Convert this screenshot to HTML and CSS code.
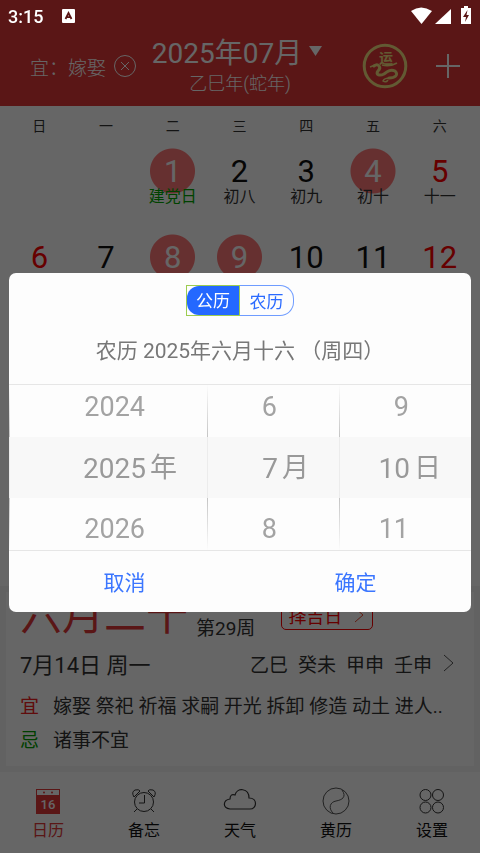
FILE: index.html
```html
<!DOCTYPE html>
<html lang="zh-CN">
<head>
    <meta charset="UTF-8">
    <meta name="viewport" content="width=device-width, initial-scale=1">
    <title>日历</title>
    <link rel="stylesheet" href="styles.css">
</head>
<body>
    <div class="app">
        <!-- Header with status bar -->
        <header class="header">
            <div class="status-bar">
                <span class="status-time">3:15</span>
                <svg class="status-app" width="13" height="14" viewBox="0 0 13 14">
                    <rect width="13" height="14" rx="1" fill="#fff"/>
                    <path d="M3.5 10 L6.5 4 L9.5 10 M4.8 8.2 H8.2" fill="none" stroke="#5a1616" stroke-width="1.8"/>
                </svg>
                <svg class="status-icons" width="62" height="20" viewBox="0 0 62 20">
                    <path d="M1 5 Q11 -2 22 5 L11.500 18 Z" fill="#fff"/>
                    <path d="M41 3 V18 H25 Z" fill="#fff"/>
                    <path d="M54 0 h4 v2 h3 v16 h-10 v-16 h3 Z" fill="#fff"/>
                    <path d="M57.500 4 L53 11 H56 L55 16 L59 9 H56.500 Z" fill="#5a1616"/>
                </svg>
            </div>
            <div class="header-main">
                <div class="header-left">
                    <span>宜：嫁娶</span>
                    <button class="icon-button" aria-label="关闭">
                        <svg width="22" height="22" viewBox="0 0 22 22" fill="none" stroke="#fff">
                            <circle cx="11" cy="11" r="10.500"/>
                            <path d="M7 7 L15 15 M15 7 L7 15"/>
                        </svg>
                    </button>
                </div>
                <div class="header-center">
                    <h1 class="month">2025年07月
                        <svg width="13" height="10" viewBox="0 0 13 10"><path d="M0 0 H13 L6.500 10 Z" fill="#fff"/></svg>
                    </h1>
                    <p class="lunar-year">乙巳年(蛇年)</p>
                </div>
                <div class="header-right">
                    <button class="icon-button" aria-label="运势">
                        <svg width="46" height="46" viewBox="0 0 46 46" fill="none" stroke="#f5e080">
                            <circle cx="23" cy="23" r="20.800" stroke-width="3"/>
                            <text class="logo-text" x="24" y="20" text-anchor="middle">运</text>
                            <path d="M12 23 C16 20 20 24 16 28 C13 32 18 33 22 31 C26 28 29 26 33 28 C37 32 33 35 27 35" stroke-width="3" stroke-linecap="round"/>
                            <path d="M28 35 Q22 35 21 38 Q24 40 26 37" stroke-width="1.500"/>
                            <path d="M8 24 L13 22 M20 22 Q28 24 35 20" stroke-width="1.500"/>
                        </svg>
                    </button>
                    <button class="icon-button" aria-label="添加">
                        <svg width="24" height="24" viewBox="0 0 24 24" stroke="#fff" stroke-width="2">
                            <path d="M12 0 V24 M0 12 H24"/>
                        </svg>
                    </button>
                </div>
            </div>
        </header>

        <!-- Month view -->
        <main class="calendar">
            <div class="week weekdays">
                <span>日</span><span>一</span><span>二</span><span>三</span><span>四</span><span>五</span><span>六</span>
            </div>
            <div class="week days">
                <div class="day"></div>
                <div class="day"></div>
                <div class="day marked"><span class="num">1</span><span class="lunar festival">建党日</span></div>
                <div class="day"><span class="num">2</span><span class="lunar">初八</span></div>
                <div class="day"><span class="num">3</span><span class="lunar">初九</span></div>
                <div class="day marked"><span class="num">4</span><span class="lunar">初十</span></div>
                <div class="day weekend"><span class="num">5</span><span class="lunar">十一</span></div>
                <div class="day weekend"><span class="num">6</span></div>
                <div class="day"><span class="num">7</span></div>
                <div class="day marked"><span class="num">8</span></div>
                <div class="day marked"><span class="num">9</span></div>
                <div class="day"><span class="num">10</span></div>
                <div class="day"><span class="num">11</span></div>
                <div class="day weekend"><span class="num">12</span></div>
            </div>
        </main>

        <!-- Almanac card -->
        <section class="almanac">
            <div class="card">
                <div class="card-top">
                    <h2 class="lunar-date">六月二十</h2>
                    <span class="week-number">第29周</span>
                    <button class="pick-button">择吉日
                        <svg width="10" height="16" viewBox="0 0 10 16" fill="none" stroke="#f04a30"><path d="M1 1 L9 8 L1 15"/></svg>
                    </button>
                </div>
                <div class="card-date">
                    <span>7月14日 周一</span>
                    <span class="pillars"><span>乙巳</span><span>癸未</span><span>甲申</span><span>壬申</span>
                        <svg width="12" height="18" viewBox="0 0 12 18" fill="none" stroke="#555"><path d="M2 1 L11 9 L2 17"/></svg>
                    </span>
                </div>
                <div class="advice"><span class="good">宜</span><span>嫁娶 祭祀 祈福 求嗣 开光 拆卸 修造 动土 进人..</span></div>
                <div class="advice"><span class="bad">忌</span><span>诸事不宜</span></div>
            </div>
        </section>

        <!-- Bottom tabs -->
        <nav class="tabs">
            <a class="tab active" href="#">
                <svg width="28" height="28" viewBox="0 0 28 28">
                    <rect x="2" y="2" width="24" height="25" fill="#e13737"/>
                    <rect x="3" y="3" width="22" height="5" fill="#fff"/>
                    <circle cx="10" cy="5.500" r="1" fill="#e13737"/>
                    <circle cx="18" cy="5.500" r="1" fill="#e13737"/>
                    <text class="tab-date" x="14" y="22" text-anchor="middle">16</text>
                </svg>
                日历
            </a>
            <a class="tab" href="#">
                <svg width="28" height="28" viewBox="0 0 28 28" fill="none" stroke="#333">
                    <circle cx="14" cy="15" r="9.500"/>
                    <path d="M14.500 8 V16 H9 M7 22 L4 25 M21 22 L24 25"/>
                    <path d="M4 10 Q1 5 5 3 Q9 2 10 4 Z M24 10 Q27 5 23 3 Q19 2 18 4 Z"/>
                </svg>
                备忘
            </a>
            <a class="tab" href="#">
                <svg width="34" height="28" viewBox="0 0 34 28" fill="none" stroke="#333">
                    <path d="M7 22 C-1 21 0 13 7 12 C7 8 9 7 12 8 C14 0 26 1 26 11 C35 11 34 22 27 22 Z" stroke-width="1.200"/>
                </svg>
                天气
            </a>
            <a class="tab" href="#">
                <svg width="28" height="28" viewBox="0 0 28 28" fill="none" stroke="#555">
                    <circle cx="14" cy="14" r="13"/>
                    <path d="M20 3 C25 10 20 13 14 14 C8 15 6 21 11 26"/>
                </svg>
                黄历
            </a>
            <a class="tab" href="#">
                <svg width="28" height="28" viewBox="0 0 28 28" fill="none" stroke="#333">
                    <circle cx="7.500" cy="8" r="5.500"/><circle cx="20" cy="8" r="5.500"/>
                    <circle cx="7.500" cy="20.500" r="5.500"/><circle cx="20" cy="20.500" r="5.500"/>
                </svg>
                设置
            </a>
        </nav>
    </div>

    <!-- Date picker dialog -->
    <div class="overlay">
        <div class="dialog" role="dialog" aria-label="选择日期">
            <div class="switch">
                <button class="switch-item selected"><span class="switch-fill">公历</span></button>
                <button class="switch-item">农历</button>
            </div>
            <p class="dialog-title">农历 2025年六月十六 （周四）</p>
            <div class="wheels">
                <ul class="wheel">
                    <li>2024</li>
                    <li class="current">2025<span class="unit">年</span></li>
                    <li>2026</li>
                </ul>
                <ul class="wheel">
                    <li>6</li>
                    <li class="current">7<span class="unit">月</span></li>
                    <li>8</li>
                </ul>
                <ul class="wheel">
                    <li>9</li>
                    <li class="current">10<span class="unit">日</span></li>
                    <li>11</li>
                </ul>
            </div>
            <div class="actions">
                <button class="action">取消</button>
                <button class="action">确定</button>
            </div>
        </div>
    </div>
</body>
</html>
```
FILE: styles.css
```css
* {
    box-sizing: border-box;
    margin: 0;
    padding: 0;
}

body {
    font-family: Roboto, "Noto Sans CJK SC", sans-serif;
    background-color: #fff;
    color: #333;
}

button {
    font-family: inherit;
    background: none;
    border: none;
    cursor: pointer;
}

svg {
    display: block;
    flex-shrink: 0;
}

.app {
    display: flex;
    flex-direction: column;
    min-height: 100vh;
}

/* Header */
.header {
    background-color: #e13737;
    color: #fff;
}

/* Status bar stays bright above the overlay */
.status-bar {
    position: relative;
    z-index: 20;
    display: flex;
    align-items: center;
    height: 32px;
    padding: 0 8px;
}

.status-time {
    font-size: 18px;
    font-weight: 500;
}

.status-app {
    margin-left: 19px;
}

.status-icons {
    margin-left: auto;
}

.header-main {
    display: grid;
    grid-template-columns: 1fr auto 1fr;
    align-items: center;
    height: 74px;
    padding: 0 20px 6px;
}

.header-left {
    display: flex;
    align-items: center;
    gap: 8px;
    padding-left: 10px;
    font-size: 19px;
    font-weight: 300;
    white-space: nowrap;
}

.header-center {
    text-align: center;
}

.month {
    display: flex;
    align-items: center;
    gap: 7px;
    padding-right: 6px;
    font-size: 28px;
    font-weight: 400;
    line-height: 36px;
}

.month svg {
    margin-bottom: 6px;
}

.lunar-year {
    font-size: 18px;
    font-weight: 300;
    line-height: 24px;
}

.header-right {
    display: flex;
    align-items: center;
    justify-content: flex-end;
    gap: 28px;
}

.logo-text {
    font-size: 14px;
    font-weight: 700;
    fill: #f5e080;
    stroke: none;
}

/* Calendar */
.calendar {
    flex: 1;
}

.week {
    display: grid;
    grid-template-columns: repeat(7, 1fr);
    padding: 0 7px 0 6px;
    text-align: center;
}

.weekdays {
    padding-top: 8px;
    padding-bottom: 10px;
    font-size: 14px;
    line-height: 24px;
}

.days {
    grid-auto-rows: 86px;
}

.day {
    display: flex;
    flex-direction: column;
    align-items: center;
    padding-top: 8px;
}

.num {
    font-size: 31px;
    line-height: 32px;
    color: #111;
}

/* Red disc behind the number */
.marked {
    background: radial-gradient(circle at 50% 23px, #ff7878 22px, transparent 23px);
}

.marked .num {
    color: #fff;
}

.weekend .num {
    color: #ff0000;
}

.lunar {
    font-size: 16px;
    line-height: 18px;
}

.festival {
    color: #00a800;
}

/* Almanac card */
.almanac {
    padding: 6px;
    background-color: #f5f5f5;
}

.card {
    padding: 0 20px 8px 14px;
    background-color: #fff;
}

.card-top {
    display: flex;
    align-items: flex-end;
    height: 52px;
}

.lunar-date {
    margin-bottom: 10px;
    font-size: 42px;
    font-weight: 400;
    line-height: 36px;
    color: #e13737;
}

.week-number {
    margin-left: 8px;
    font-size: 19px;
    line-height: 30px;
}

.pick-button {
    display: flex;
    align-items: center;
    gap: 12px;
    height: 28px;
    margin: 0 0 14px 26px;
    padding: 0 8px 2px 6px;
    border: 1px solid #f00;
    border-radius: 5px;
    font-size: 18px;
    color: #f00;
}

.card-date {
    display: flex;
    align-items: center;
    justify-content: space-between;
    height: 38px;
    margin-bottom: 8px;
    font-size: 22px;
}

.pillars {
    display: flex;
    align-items: center;
    gap: 10px;
    font-size: 19px;
}

.advice {
    display: flex;
    gap: 14px;
    font-size: 19px;
    line-height: 34px;
    white-space: nowrap;
}

.good {
    color: #f02020;
}

.bad {
    color: #00a000;
}

/* Bottom tabs */
.tabs {
    display: grid;
    grid-template-columns: repeat(5, 1fr);
    height: 81px;
    padding-top: 15px;
}

.tab {
    display: flex;
    flex-direction: column;
    align-items: center;
    gap: 4px;
    font-size: 16px;
    line-height: 24px;
    color: #111;
    text-decoration: none;
}

.tab.active {
    color: #e13737;
}

.tab-date {
    font-size: 13px;
    font-weight: 500;
    fill: #fff;
}

/* Dialog */
.overlay {
    position: fixed;
    inset: 0;
    z-index: 10;
    display: flex;
    align-items: center;
    padding: 32px 9px 0;
    background-color: rgba(0, 0, 0, 0.6);
}

.dialog {
    width: 100%;
    padding-top: 12px;
    border-radius: 7px;
    background-color: #fdfdfd;
    overflow: hidden;
}

.switch {
    display: flex;
    justify-content: center;
}

.switch-item {
    width: 54px;
    height: 31px;
    border: 1px solid #6f9cff;
    border-left: none;
    border-radius: 0 14px 14px 0;
    font-size: 17px;
    color: #2b6bff;
}

.switch-item.selected {
    border: 1px solid #9ccc50;
    border-radius: 0;
    color: #fff;
}

.switch-fill {
    display: block;
    padding-top: 2px;
    border-radius: 12px 0 0 12px;
    background-color: #2468ff;
    line-height: 27px;
}

.dialog-title {
    padding: 19px 0 16px;
    font-size: 21px;
    line-height: 33px;
    text-align: center;
    color: #777;
}

.wheels {
    display: grid;
    grid-template-columns: 3fr 2fr 2fr;
    height: 167px;
    border-top: 1px solid #e6e6e6;
    border-bottom: 1px solid #e6e6e6;
}

.wheel {
    display: flex;
    flex-direction: column;
    justify-content: center;
    overflow: hidden;
    border-left: 1px solid;
    border-image: linear-gradient(transparent, #c4c4c4 32%, #ececec 32%, #ececec 68%, #c4c4c4 68%, transparent) 1;
    list-style: none;
}

.wheel li {
    flex-shrink: 0;
    height: 61px;
    padding-right: 62px;
    font-size: 27px;
    line-height: 63px;
    text-align: right;
    color: #a3a3a3;
}

.wheel .current {
    display: flex;
    justify-content: flex-end;
    gap: 4px;
    padding-right: 30px;
    background-color: #f8f8f8;
    font-size: 28px;
    color: #999;
}

.unit {
    font-size: 27px;
}

.actions {
    display: grid;
    grid-template-columns: 1fr 1fr;
}

.action {
    height: 61px;
    padding-bottom: 2px;
    font-size: 21px;
    color: #3b76ff;
}
```
